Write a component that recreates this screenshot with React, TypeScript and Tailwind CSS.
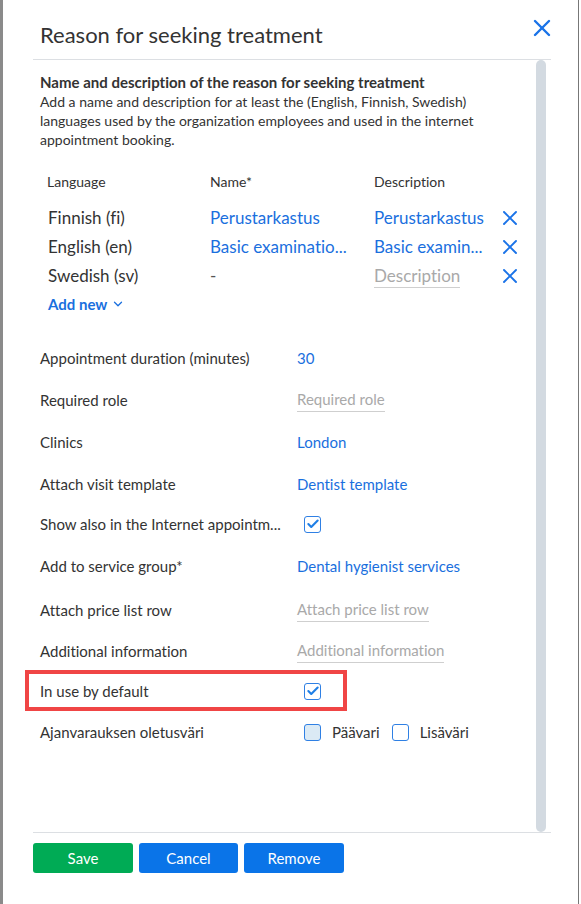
import { Check, X, ChevronDown } from 'lucide-react';

const translations = [
  { lang: 'Finnish (fi)', name: 'Perustarkastus', desc: 'Perustarkastus' },
  { lang: 'English (en)', name: 'Basic examinatio...', desc: 'Basic examin...' },
  { lang: 'Swedish (sv)', name: '-', desc: '' },
];

function Checkbox({ checked, tinted }: { checked?: boolean; tinted?: boolean }) {
  return (
    <span
      className={`flex h-[17px] w-[17px] items-center justify-center rounded-[3px] border-[1.6px] border-[#2f80e4] ${
        tinted ? 'bg-[#dbeaf5]' : 'bg-white'
      }`}
    >
      {checked && <Check size={14} strokeWidth={3.6} className="text-[#1f7fe6]" />}
    </span>
  );
}

function Placeholder({ text }: { text: string }) {
  return <span className="border-b border-[#cfcfcf] pb-[1px] text-[#a9a9a9]">{text}</span>;
}

function Value({ text }: { text: string }) {
  return <span className="text-[#1a6fde]">{text}</span>;
}

export default function App() {
  const rows: { label: string; h: string; value: React.ReactNode; highlight?: boolean }[] = [
    { label: 'Appointment duration (minutes)', h: 'h-[42px]', value: <Value text="30" /> },
    { label: 'Required role', h: 'h-[42px]', value: <Placeholder text="Required role" /> },
    { label: 'Clinics', h: 'h-[42px]', value: <Value text="London" /> },
    { label: 'Attach visit template', h: 'h-[42px]', value: <Value text="Dentist template" /> },
    {
      label: 'Show also in the Internet appointm...',
      h: 'h-[38px]',
      value: (
        <span className="pl-[7px]">
          <Checkbox checked />
        </span>
      ),
    },
    { label: 'Add to service group*', h: 'h-[46px]', value: <Value text="Dental hygienist services" /> },
    { label: 'Attach price list row', h: 'h-[42px]', value: <Placeholder text="Attach price list row" /> },
    { label: 'Additional information', h: 'h-[40px]', value: <Placeholder text="Additional information" /> },
    {
      label: 'In use by default',
      h: 'h-[40px]',
      highlight: true,
      value: (
        <span className="pl-[7px]">
          <Checkbox checked />
        </span>
      ),
    },
    {
      label: 'Ajanvarauksen oletusväri',
      h: 'h-[42px]',
      value: (
        <span className="flex items-center pl-[7px]">
          <Checkbox tinted />
          <span className="ml-[11px] mr-[12px]">Päävari</span>
          <Checkbox />
          <span className="ml-[11px]">Lisäväri</span>
        </span>
      ),
    },
  ];

  return (
    <div className="flex h-[904px] w-[581px] bg-white font-['Lato','Liberation_Sans',sans-serif] text-[#333] [font-variant-ligatures:none]">
      <div className="w-[3px] bg-[#8a8a8a]" />
      <div className="flex flex-1 flex-col pl-[30px] pr-[27px]">
        {/* header */}
        <div className="flex h-[60px] items-start justify-between border-b border-[#dcdfe3]">
          <h1 className="pl-[7px] pt-[20px] text-[22px] leading-[30px] text-[#333]">
            Reason for seeking treatment
          </h1>
          <X size={28} strokeWidth={2.1} className="mr-[-5px] mt-[14px] text-[#1a73e8]" />
        </div>

        {/* body */}
        <div className="flex h-[773px] border-b border-[#dcdfe3]">
          <div className="flex-1 pl-[7px] pt-[12px]">
            <h2 className="text-[15px] font-bold leading-[20px]">
              Name and description of the reason for seeking treatment
            </h2>
            <p className="w-[450px] text-[14px] leading-[19px]">
              Add a name and description for at least the (English, Finnish, Swedish) languages used by the
              organization employees and used in the internet appointment booking.
            </p>

            <div className="ml-[8px] mt-[23px]">
              <div className="grid h-[20px] grid-cols-[162px_164px_130px] text-[14px] leading-[20px]">
                <span className="-ml-px">Language</span>
                <span>Name*</span>
                <span>Description</span>
              </div>
              <div className="mt-[11px]">
                {translations.map((t) => (
                  <div
                    key={t.lang}
                    className="grid h-[29px] grid-cols-[162px_164px_124px_24px] items-center text-[17px] whitespace-nowrap"
                  >
                    <span>{t.lang}</span>
                    <span className={t.name === '-' ? 'text-[#555]' : 'text-[#1a6fde]'}>{t.name}</span>
                    <span className="text-[#1a6fde]">
                      {t.desc ? t.desc : <Placeholder text="Description" />}
                    </span>
                    <X size={24} strokeWidth={1.9} className="text-[#1a73e8]" />
                  </div>
                ))}
              </div>
              <div className="mt-[4px] flex h-[20px] items-center gap-[4px] text-[15px] font-bold text-[#1a6fde]">
                Add new
                <ChevronDown size={14} strokeWidth={2.2} />
              </div>
            </div>

            <div className="mt-[23px] text-[15px]">
              {rows.map((r) => (
                <div key={r.label} className={`relative flex items-center ${r.h}`}>
                  {r.highlight && (
                    <div className="absolute -left-[15px] top-[-1px] h-[41px] w-[322px] border-4 border-[#f04545]" />
                  )}
                  <span className="w-[257px] whitespace-nowrap">{r.label}</span>
                  {r.value}
                </div>
              ))}
            </div>
          </div>
          <div className="mr-[5px] w-[10px] rounded-full bg-[#d3dae1]" />
        </div>

        {/* footer */}
        <div className="flex gap-[6px] pt-[10px] text-[15px] text-white">
          <button className="h-[30px] w-[100px] rounded-[3px] bg-[#00ab55]">Save</button>
          <button className="h-[30px] w-[99px] rounded-[3px] bg-[#0a74e8]">Cancel</button>
          <button className="h-[30px] w-[100px] rounded-[3px] bg-[#0a74e8]">Remove</button>
        </div>
      </div>
      <div className="w-[3px] border-l border-[#777] bg-white" />
    </div>
  );
}
